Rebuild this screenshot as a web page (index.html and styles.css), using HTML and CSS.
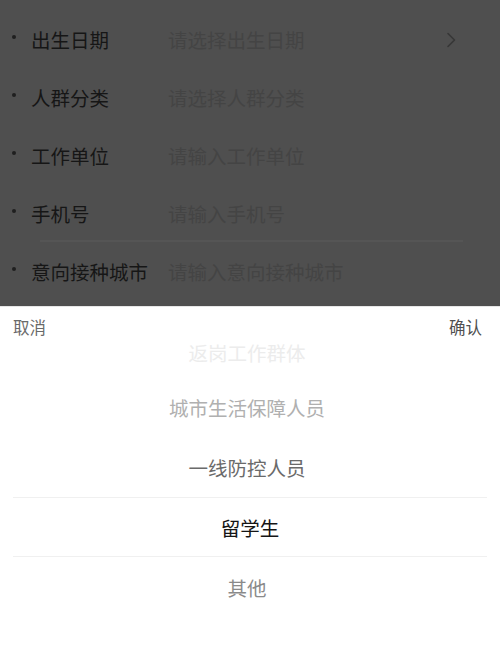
FILE: index.html
```html
<!DOCTYPE html>
<html lang="zh-CN">
<head>
<meta charset="utf-8">
<title>人群分类</title>
<link rel="stylesheet" href="styles.css">
</head>
<body>
<div class="page">
  <div class="form">
    <div class="row">
      <span class="dot"></span>
      <span class="label">出生日期</span>
      <span class="ph">请选择出生日期</span>
      <svg class="arrow" width="10" height="16" viewBox="0 0 10 16"><path d="M2 1.5 L8.5 8 L2 14.5" fill="none" stroke="#373737" stroke-width="1.6" stroke-linecap="round" stroke-linejoin="round"/></svg>
    </div>
    <div class="row">
      <span class="dot"></span>
      <span class="label">人群分类</span>
      <span class="ph">请选择人群分类</span>
    </div>
    <div class="row">
      <span class="dot"></span>
      <span class="label">工作单位</span>
      <span class="ph">请输入工作单位</span>
    </div>
    <div class="row sep">
      <span class="dot"></span>
      <span class="label">手机号</span>
      <span class="ph">请输入手机号</span>
    </div>
    <div class="row">
      <span class="dot"></span>
      <span class="label">意向接种城市</span>
      <span class="ph">请输入意向接种城市</span>
    </div>
  </div>
  <div class="sheet">
    <div class="sheet-head">
      <span class="cancel">取消</span>
      <span class="confirm">确认</span>
    </div>
    <div class="picker">
      <div class="list">
        <div class="item c1">返岗工作群体</div>
        <div class="item c2">城市生活保障人员</div>
        <div class="item c3">一线防控人员</div>
        <div class="item selected">留学生</div>
        <div class="item c5">其他</div>
      </div>
    </div>
  </div>
</div>
</body>
</html>
```

FILE: styles.css
```css
html, body {
  margin: 0;
  padding: 0;
}
body {
  font-family: "Noto Sans CJK SC", "Noto Sans", sans-serif;
  background: #4f4f4f;
}
.page {
  width: 500px;
  height: 652px;
  display: flex;
  flex-direction: column;
  overflow: hidden;
}
.form {
  height: 306px;
  padding-top: 11px;
  box-sizing: border-box;
  background: #4f4f4f;
  flex: none;
}
.row {
  display: flex;
  align-items: center;
  height: 58px;
  font-size: 19.5px;
  line-height: 24px;
}
.row.sep {
  position: relative;
}
.row.sep::after {
  content: "";
  position: absolute;
  left: 40px;
  right: 37px;
  bottom: 1px;
  height: 2px;
  background: #555555;
}
.dot {
  width: 4px;
  height: 4px;
  border-radius: 50%;
  background: #1f1f1f;
  margin: -6px 15px 0 12px;
  flex: none;
}
.label {
  width: 137px;
  flex: none;
  color: #161616;
}
.ph {
  flex: 1;
  color: #444444;
}
.arrow {
  margin-right: 44px;
  flex: none;
}
.sheet {
  flex: 1;
  background: #ffffff;
  display: flex;
  flex-direction: column;
  border-top: 1px solid #e6e6e6;
}
.sheet-head {
  height: 39px;
  display: flex;
  justify-content: space-between;
  align-items: center;
  padding: 0 18px 0 13px;
  font-size: 16.5px;
  flex: none;
}
.cancel {
  color: #6a6a6a;
}
.confirm {
  color: #505050;
}
.picker {
  flex: 1;
}
.list {
  padding-right: 6px;
}
.item {
  height: 60px;
  display: flex;
  align-items: center;
  justify-content: center;
  font-size: 19.5px;
  color: #888888;
}
.item.c1 {
  height: 39px;
  margin-top: -8px;
  align-items: flex-start;
  color: #ececec;
}
.item.c2 {
  color: #b0b0b0;
}
.item.c3 {
  color: #6a6a6a;
}
.item.selected {
  color: #151515;
  border-top: 1px solid #f0f0f0;
  border-bottom: 1px solid #f0f0f0;
  margin: 0 7px 0 13px;
  height: 58px;
}
.item.c5 {
  color: #8a8a8a;
}
```
